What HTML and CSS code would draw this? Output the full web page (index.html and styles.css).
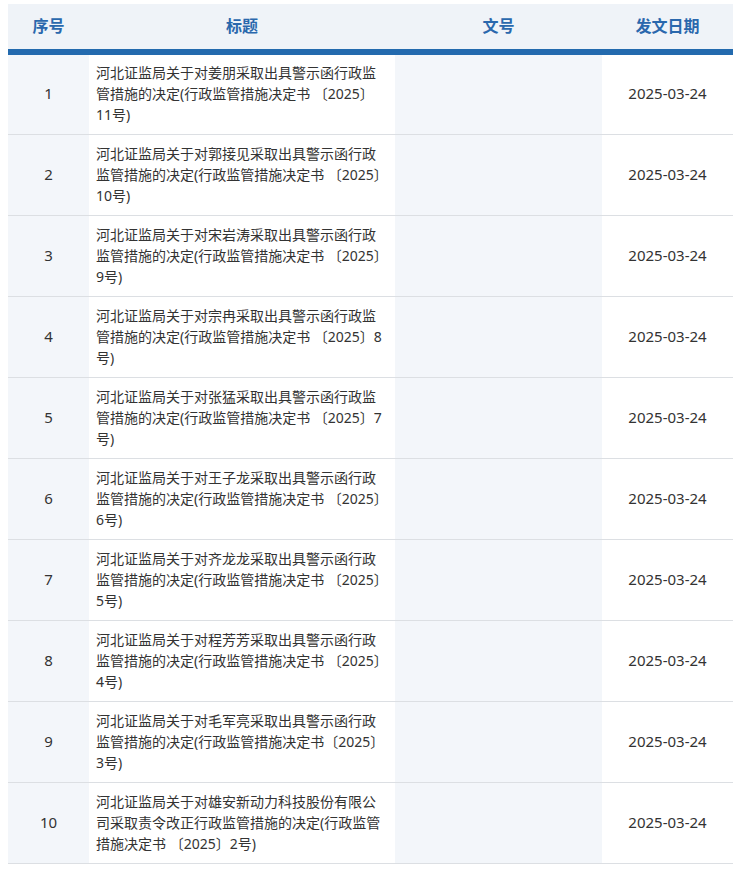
FILE: index.html
```html
<!DOCTYPE html>
<html lang="zh-CN">
<head>
    <meta charset="UTF-8">
    <title>行政监管措施</title>
    <link rel="stylesheet" href="styles.css">
</head>
<body>
    <table class="lista">
        <thead>
            <tr>
                <th class="col-num">序号</th>
                <th class="col-title">标题</th>
                <th class="col-doc">文号</th>
                <th class="col-date">发文日期</th>
            </tr>
        </thead>
        <tbody>
            <tr>
                <td class="col-num">1</td>
                <td class="col-title">河北证监局关于对姜朋采取出具警示函行政监管措施的决定(行政监管措施决定书 〔2025〕11号)</td>
                <td class="col-doc"></td>
                <td class="col-date">2025-03-24</td>
            </tr>
            <tr>
                <td class="col-num">2</td>
                <td class="col-title">河北证监局关于对郭接见采取出具警示函行政监管措施的决定(行政监管措施决定书 〔2025〕10号)</td>
                <td class="col-doc"></td>
                <td class="col-date">2025-03-24</td>
            </tr>
            <tr>
                <td class="col-num">3</td>
                <td class="col-title">河北证监局关于对宋岩涛采取出具警示函行政监管措施的决定(行政监管措施决定书 〔2025〕9号)</td>
                <td class="col-doc"></td>
                <td class="col-date">2025-03-24</td>
            </tr>
            <tr>
                <td class="col-num">4</td>
                <td class="col-title">河北证监局关于对宗冉采取出具警示函行政监管措施的决定(行政监管措施决定书 〔2025〕8号)</td>
                <td class="col-doc"></td>
                <td class="col-date">2025-03-24</td>
            </tr>
            <tr>
                <td class="col-num">5</td>
                <td class="col-title">河北证监局关于对张猛采取出具警示函行政监管措施的决定(行政监管措施决定书 〔2025〕7号)</td>
                <td class="col-doc"></td>
                <td class="col-date">2025-03-24</td>
            </tr>
            <tr>
                <td class="col-num">6</td>
                <td class="col-title">河北证监局关于对王子龙采取出具警示函行政监管措施的决定(行政监管措施决定书 〔2025〕6号)</td>
                <td class="col-doc"></td>
                <td class="col-date">2025-03-24</td>
            </tr>
            <tr>
                <td class="col-num">7</td>
                <td class="col-title">河北证监局关于对齐龙龙采取出具警示函行政监管措施的决定(行政监管措施决定书 〔2025〕5号)</td>
                <td class="col-doc"></td>
                <td class="col-date">2025-03-24</td>
            </tr>
            <tr>
                <td class="col-num">8</td>
                <td class="col-title">河北证监局关于对程芳芳采取出具警示函行政监管措施的决定(行政监管措施决定书 〔2025〕4号)</td>
                <td class="col-doc"></td>
                <td class="col-date">2025-03-24</td>
            </tr>
            <tr>
                <td class="col-num">9</td>
                <td class="col-title">河北证监局关于对毛军亮采取出具警示函行政监管措施的决定(行政监管措施决定书〔2025〕3号)</td>
                <td class="col-doc"></td>
                <td class="col-date">2025-03-24</td>
            </tr>
            <tr>
                <td class="col-num">10</td>
                <td class="col-title">河北证监局关于对雄安新动力科技股份有限公司采取责令改正行政监管措施的决定(行政监管措施决定书 〔2025〕2号)</td>
                <td class="col-doc"></td>
                <td class="col-date">2025-03-24</td>
            </tr>
        </tbody>
    </table>
</body>
</html>
```

FILE: styles.css
```css
* {
    margin: 0;
    padding: 0;
    box-sizing: border-box;
}

body {
    font-family: "Noto Sans", "Noto Sans CJK SC", sans-serif;
    background: white;
    color: #333;
    padding: 4px 8px;
}

.lista {
    width: 725px;
    border-collapse: collapse;
    table-layout: fixed;
    font-size: 14px;
}

.lista th {
    height: 48px;
    padding-bottom: 4px;
    background: #eff3f8;
    color: #2a68ad;
    font-size: 16px;
    font-weight: bold;
    text-align: center;
    border-bottom: 6px solid #236aae;
}

.lista td {
    height: 81px;
    padding: 7px 7px 9px;
    line-height: 21px;
    text-align: center;
    vertical-align: middle;
    border-bottom: 1px solid #dcdfe3;
}

.col-num {
    width: 81px;
}

.col-title {
    width: 306px;
}

.col-doc {
    width: 207px;
}

.col-date {
    width: 131px;
}

.lista td.col-num,
.lista td.col-doc {
    background: #f3f6fa;
}

.lista td.col-num {
    font-size: 15px;
}

.lista td.col-title {
    text-align: left;
}

.lista td.col-date {
    font-size: 15px;
}
```
